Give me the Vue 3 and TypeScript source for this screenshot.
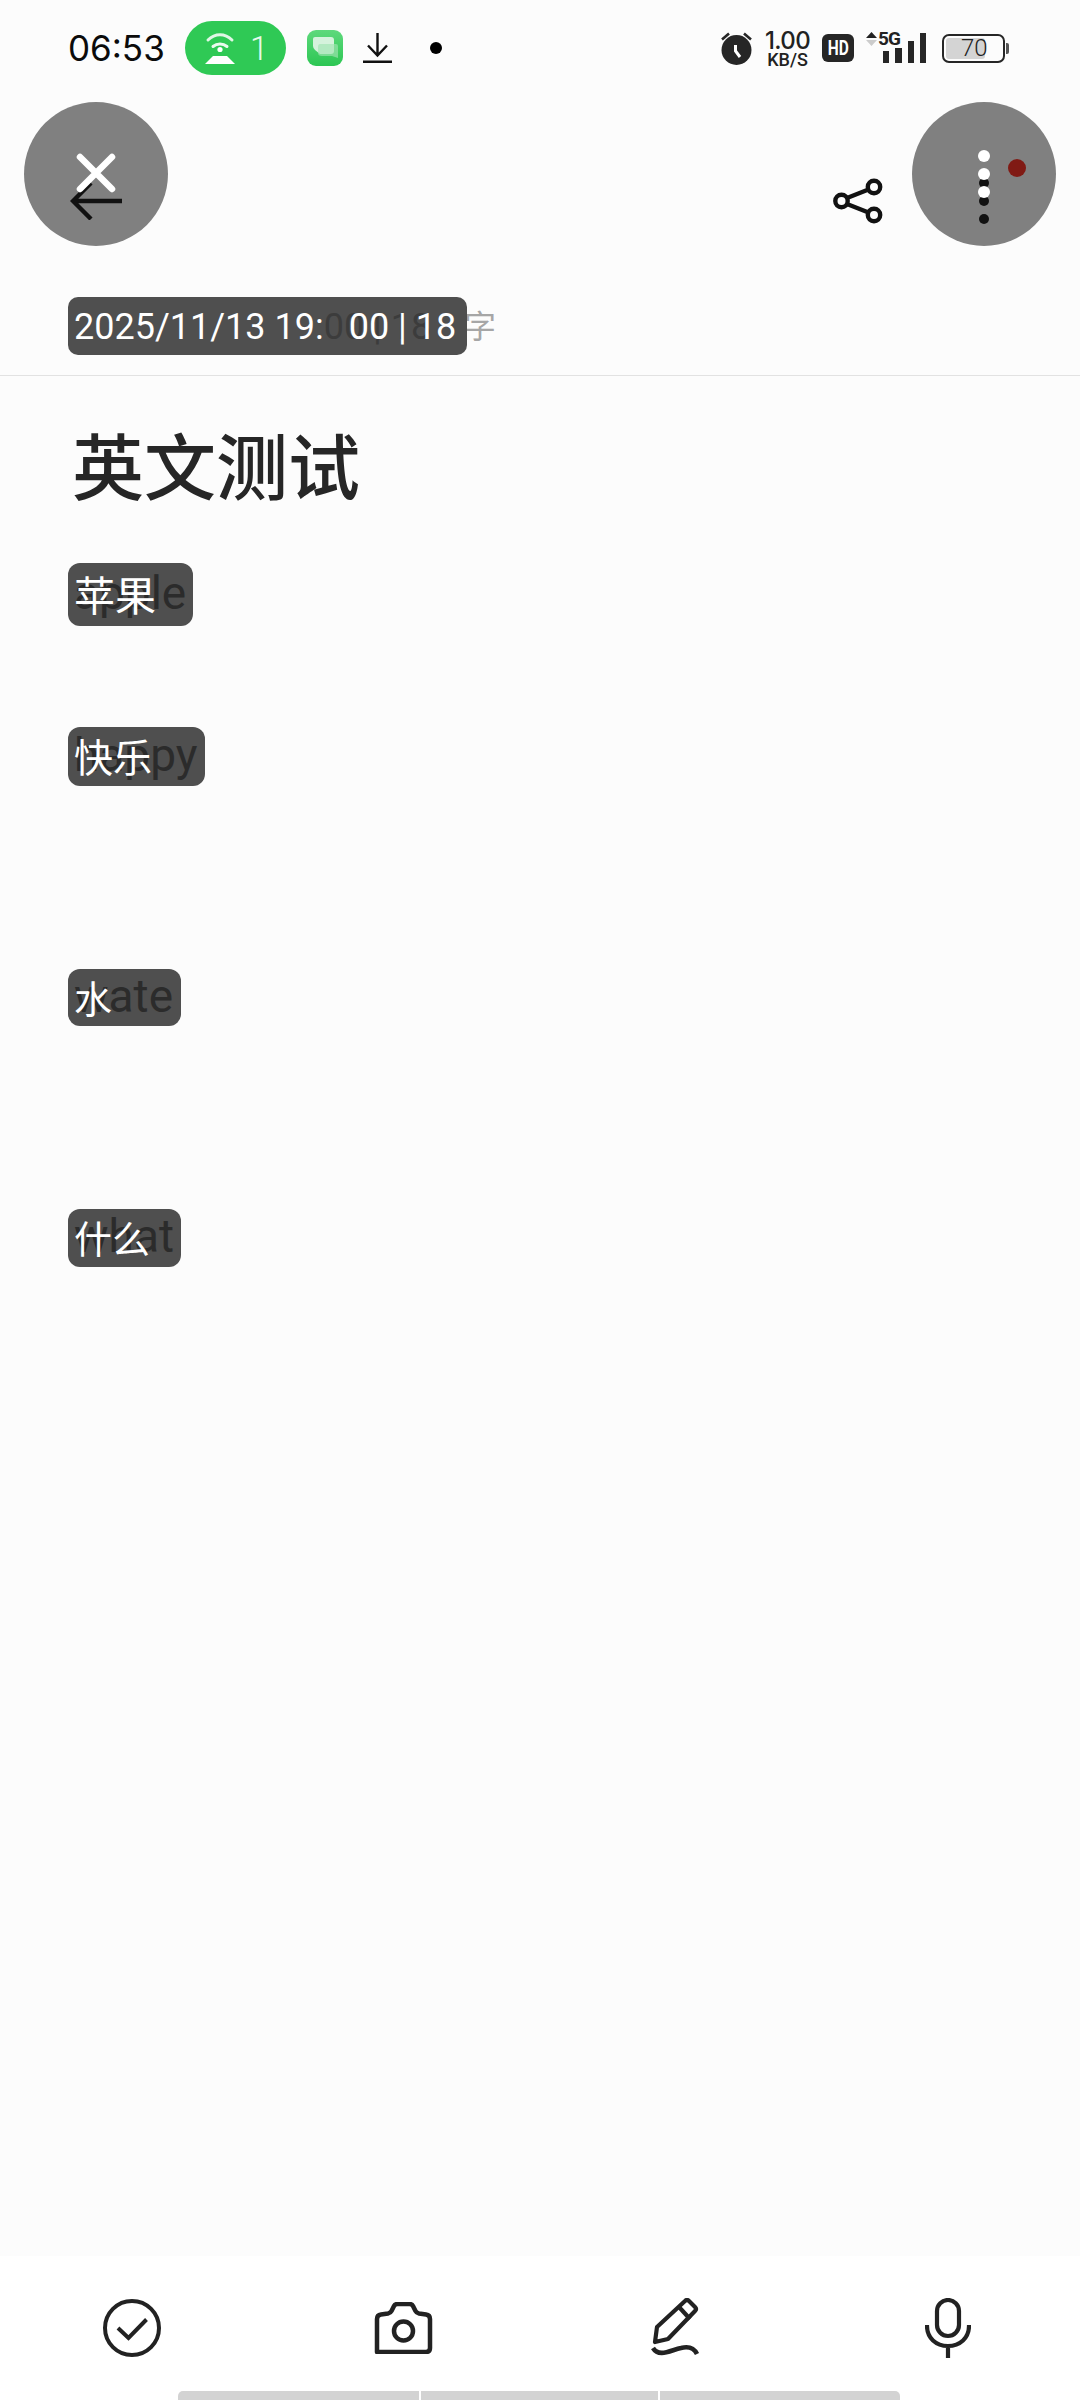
<script setup lang="ts">
interface Word { en: string; zh: string; w: number; h: number; gap: number; fs: number }
const words: Word[] = [
  { en: 'apple', zh: '苹果', w: 125, h: 63, gap: 0, fs: 41 },
  { en: 'happy', zh: '快乐', w: 137, h: 59, gap: 101, fs: 39 },
  { en: 'wate', zh: '水', w: 113, h: 57, gap: 183, fs: 38 },
  { en: 'what', zh: '什么', w: 113, h: 58, gap: 183, fs: 38 },
]
</script>

<template>
  <div class="page">
    <header class="status">
      <div class="status-left">
        <span class="time">06:53</span>
        <span class="pill">
          <svg width="30" height="32" viewBox="0 0 30 32" fill="none">
            <path d="M3 8C10 1 20 1 27 8" stroke="#fff" stroke-width="3" stroke-linecap="round" opacity=".85" />
            <path d="M8 14.500C12 11 18 11 22 14.500" stroke="#fff" stroke-width="3" stroke-linecap="round" opacity=".9" />
            <circle cx="15" cy="17.500" r="2.600" fill="#fff" />
            <path d="M8 24H22L30 32H0Z" fill="#fff" />
          </svg>
          <span class="pill-num">1</span>
        </span>
        <svg class="app" width="36" height="36" viewBox="0 0 36 36">
          <defs>
            <linearGradient id="appg" x1="0" y1="0" x2="0" y2="1">
              <stop offset="0" stop-color="#5ed97c" />
              <stop offset="1" stop-color="#2cc653" />
            </linearGradient>
          </defs>
          <rect width="36" height="36" rx="9" fill="url(#appg)" />
          <path d="M8 7H24Q27 7 27 10V21Q27 24 24 24H13L8 20Q6 18 6 16V9Q6 7 8 7Z" fill="#d5f2dc" />
          <path d="M13 14H29Q31 14 31 16V28L25 26H15Q11 26 11 23V17Q11 14 13 14Z" fill="#a2e3b2" opacity=".65" />
        </svg>
        <svg class="dl" width="29" height="30" viewBox="0 0 29 30" fill="none" stroke="#111" stroke-width="2.400">
          <path d="M14.500 0V22M5 12.500L14.500 22.500L24 12.500M0 28.800H29" />
        </svg>
        <span class="dot"></span>
      </div>
      <div class="status-right">
        <svg width="31" height="33" viewBox="0 0 31 33">
          <circle cx="15.500" cy="18" r="15" fill="#262626" />
          <path d="M1 7.500L8 1.500M30 7.500L23 1.500" stroke="#262626" stroke-width="2.600" />
          <path d="M14.500 13V19L19 25" stroke="#fff" stroke-width="3" fill="none" />
        </svg>
        <span class="speed"><span class="speed-num">1.00</span><span class="speed-unit">KB/S</span></span>
        <span class="hd"><span class="hd-text">HD</span></span>
        <span class="signal">
          <svg class="arrows" width="11" height="14" viewBox="0 0 11 14">
            <path d="M5.500 0L11 6H0Z" fill="#222" />
            <path d="M5.500 14L11 8H0Z" fill="#ccc" />
          </svg>
          <span class="five">5G</span>
          <span class="bars">
            <i class="b1"></i><i class="b2"></i><i class="b3"></i><i class="b4"></i>
          </span>
        </span>
        <span class="batt">
          <span class="batt-box"><span class="batt-fill"></span><span class="batt-num">70</span></span>
          <span class="batt-tip"></span>
        </span>
      </div>
    </header>

    <div class="toolbar">
      <span class="ghost ghost-left"></span>
      <span class="ghost ghost-right"></span>
      <svg class="back" width="52" height="38" viewBox="0 0 52 38" fill="none" stroke="#111" stroke-width="4.400">
        <path d="M52 19H3M21 1L3 19L21 37" />
      </svg>
      <svg class="close" width="40" height="40" viewBox="0 0 40 40" stroke="#fff" stroke-width="6.500" stroke-linecap="round">
        <path d="M4 4L36 36M36 4L4 36" />
      </svg>
      <svg class="share" width="50" height="46" viewBox="0 0 50 46" fill="none" stroke="#111" stroke-width="4.400">
        <circle cx="8.500" cy="23" r="6.200" />
        <circle cx="41" cy="9" r="6.200" />
        <circle cx="41" cy="37" r="6.200" />
        <path d="M14 20L35.500 11.500M14 26L35.500 34.500" />
      </svg>
      <span class="dots dots-dark"><i></i><i></i><i></i></span>
      <span class="dots dots-light"><i></i><i></i><i></i></span>
      <span class="red"></span>
    </div>

    <div class="meta">
      <div class="meta-box">
        <span class="meta-dim">2025/11/13 19:00 | 18</span>
        <span class="meta-top">2025/11/13 19:<span class="meta-gap"></span>00 | 18</span>
      </div>
      <span class="meta-unit">字</span>
    </div>

    <main class="note">
      <h1 class="title">英文测试</h1>
      <div
        v-for="word in words"
        :key="word.en"
        class="tag"
        :style="{ width: word.w + 'px', height: word.h + 'px', marginTop: word.gap + 'px' }"
      >
        <span class="en">{{ word.en }}</span>
        <span class="zh" :style="{ fontSize: word.fs + 'px' }">{{ word.zh }}</span>
      </div>
    </main>

    <footer class="bottom">
      <div class="tools">
        <span class="tool">
          <svg width="60" height="60" viewBox="0 0 60 60" fill="none" stroke="#222" stroke-width="4">
            <circle cx="30" cy="30" r="27" />
            <path d="M16 30L26.500 40L44.500 21.500" />
          </svg>
        </span>
        <span class="tool">
          <svg width="60" height="52" viewBox="0 0 60 52" fill="none" stroke="#222" stroke-width="4.500" stroke-linejoin="round">
            <path d="M3 50V17Q3 13 7 12.500L14 11.500Q16.500 11 17.500 9L20 4Q21 2 23.500 2H35.500Q38 2 39 4L41.500 9Q42.500 11 45 11.500L52 12.500Q56 13 56 17V46Q56 50 52 50Z" />
            <circle cx="29.500" cy="29" r="9.500" />
          </svg>
        </span>
        <span class="tool">
          <svg width="50" height="60" viewBox="0 0 50 60" fill="none" stroke="#222" stroke-width="4.200" stroke-linejoin="round">
            <path d="M4 44L6 29L34 3Q36 1 38 3L44 9Q46 11 44 13L17 41Z" />
            <path d="M28 9L39 21" />
            <path d="M2 50C8 60 20 52 30 50C38 48 43 50 46 56" stroke-width="4.600" />
          </svg>
        </span>
        <span class="tool">
          <svg width="46" height="60" viewBox="0 0 46 60" fill="none" stroke="#222" stroke-width="4.200">
            <rect x="12" y="2" width="22" height="36" rx="11" />
            <path d="M2 27V28C2 40 11 48 23 48C35 48 44 40 44 28V27M23 48V60" />
          </svg>
        </span>
      </div>
      <div class="home"><i class="h1"></i><i class="h2"></i><i class="h3"></i></div>
    </footer>
  </div>
</template>

<style scoped>
.page {
  position: relative;
  width: 1080px;
  height: 2400px;
  overflow: hidden;
  background: #fcfcfc;
  display: flex;
  flex-direction: column;
  font-family: Roboto, "Noto Sans CJK SC", sans-serif;
  color: #222;
}

/* status bar */
.status {
  height: 95px;
  flex: none;
  box-sizing: border-box;
  padding: 1px 71px 0 68px;
  display: flex;
  justify-content: space-between;
  align-items: center;
}
.status-left,
.status-right {
  display: flex;
  align-items: center;
}
.time {
  width: 117px;
  font-family: Inter, sans-serif;
  font-size: 35px;
  color: #0b0b0b;
}
.pill {
  width: 101px;
  height: 54px;
  box-sizing: border-box;
  padding-left: 20px;
  border-radius: 27px;
  background: #2fc955;
  display: flex;
  align-items: center;
  gap: 15px;
}
.pill-num {
  font-size: 33px;
  color: #e8f9ec;
  font-weight: 300;
}
.app {
  margin-left: 21px;
}
.dl {
  margin-left: 20px;
}
.dot {
  width: 12px;
  height: 12px;
  border-radius: 50%;
  background: #000;
  margin-left: 38px;
}
.speed {
  width: 47px;
  margin-left: 12px;
  display: flex;
  flex-direction: column;
  align-items: center;
}
.speed-num {
  font-family: Inter, sans-serif;
  font-size: 24px;
  line-height: 21px;
  font-weight: 500;
  letter-spacing: -0.6px;
}
.speed-unit {
  margin-top: 1px;
  font-size: 18px;
  line-height: 15px;
  font-weight: 500;
  white-space: nowrap;
}
.hd {
  width: 32px;
  height: 28px;
  margin-left: 11px;
  background: #262626;
  border-radius: 6px;
  color: #fff;
  display: flex;
  align-items: center;
  justify-content: center;
}
.hd-text {
  font-size: 21px;
  font-weight: 700;
  line-height: 28px;
  transform: scaleX(0.74);
}
.signal {
  position: relative;
  width: 60px;
  height: 30px;
  margin-left: 12px;
}
.arrows {
  position: absolute;
  left: 0;
  top: -1px;
}
.five {
  position: absolute;
  left: 12px;
  top: -2px;
  font-size: 19px;
  line-height: 16px;
  font-weight: 700;
  letter-spacing: -0.8px;
}
.bars {
  position: absolute;
  left: 17px;
  bottom: 0;
  display: flex;
  align-items: flex-end;
  gap: 6px;
}
.bars i {
  display: block;
  width: 6.300px;
  background: #262626;
}
.b1 { height: 12px; }
.b2 { height: 15px; }
.b3 { height: 22px; }
.b4 { height: 30px; }
.batt {
  display: flex;
  align-items: center;
  margin-left: 16px;
}
.batt-box {
  position: relative;
  display: block;
  box-sizing: border-box;
  width: 63px;
  height: 29px;
  border: 2px solid #262626;
  border-radius: 7px;
}
.batt-fill {
  position: absolute;
  left: 2px;
  top: 2px;
  bottom: 2px;
  width: 39px;
  background: #d4d4d4;
  border-radius: 3px;
}
.batt-num {
  position: absolute;
  left: 17px;
  top: 0;
  font-size: 24px;
  line-height: 25px;
  font-weight: 300;
}
.batt-tip {
  width: 3px;
  height: 11px;
  margin-left: 1px;
  background: #555;
  border-radius: 0 2px 2px 0;
}

/* toolbar */
.toolbar {
  position: relative;
  height: 200px;
  flex: none;
}
.ghost {
  position: absolute;
  top: 7px;
  width: 144px;
  height: 144px;
  border-radius: 50%;
  background: #808080;
}
.ghost-left { left: 24px; }
.ghost-right { left: 912px; }
.back {
  position: absolute;
  left: 70px;
  top: 87px;
}
.close {
  position: absolute;
  left: 76px;
  top: 58px;
}
.share {
  position: absolute;
  left: 833px;
  top: 83px;
}
.dots {
  position: absolute;
  display: flex;
  flex-direction: column;
}
.dots i {
  display: block;
  border-radius: 50%;
}
.dots-dark {
  left: 979px;
  top: 83px;
  gap: 8px;
}
.dots-dark i {
  width: 10px;
  height: 10px;
  background: #111;
}
.dots-light {
  left: 978px;
  top: 55px;
  gap: 6px;
}
.dots-light i {
  width: 12px;
  height: 12px;
  background: #fff;
}
.red {
  position: absolute;
  left: 1008px;
  top: 64px;
  width: 18px;
  height: 18px;
  border-radius: 50%;
  background: #801a14;
}

/* date line */
.meta {
  flex: none;
  height: 81px;
  box-sizing: border-box;
  padding: 2px 0 0 68px;
  border-bottom: 1px solid #e2e2e2;
  display: flex;
  align-items: flex-start;
}
.meta-box {
  position: relative;
  width: 399px;
  height: 58px;
  background: #4f4f4f;
  border-radius: 10px;
}
.meta-dim,
.meta-top {
  position: absolute;
  left: 6px;
  top: 1px;
  font-size: 36px;
  line-height: 58px;
  white-space: nowrap;
}
.meta-dim {
  color: #3c3c3c;
}
.meta-top {
  color: #fff;
}
.meta-gap {
  display: inline-block;
  width: 25px;
}
.meta-unit {
  margin: 10px 0 0 -3px;
  font-size: 32px;
  line-height: 40px;
  color: #a6a6a6;
}

/* note body */
.note {
  flex: 1;
  padding: 49px 0 0 68px;
}
.title {
  margin: 0 0 48px 4px;
  font-size: 72px;
  line-height: 90px;
  font-weight: 500;
  color: #262626;
}
.tag {
  position: relative;
  background: #4f4f4f;
  border-radius: 12px;
  display: flex;
  align-items: center;
}
.en {
  margin: -4px 0 0 6px;
  font-size: 46px;
  line-height: 46px;
  color: #2b2b2b;
  white-space: nowrap;
}
.zh {
  position: absolute;
  left: 6px;
  top: -3px;
  bottom: 0;
  display: flex;
  align-items: center;
  color: #fff;
  white-space: nowrap;
}

/* bottom bar */
.bottom {
  flex: none;
  height: 144px;
  box-sizing: border-box;
  padding-top: 42px;
  background: #fff;
}
.tools {
  margin-left: -4px;
  height: 60px;
  display: flex;
}
.tool {
  width: 272px;
  flex: none;
  display: flex;
  align-items: center;
  justify-content: center;
}
.home {
  margin: 33px 0 0 178px;
  width: 722px;
  height: 9px;
  display: flex;
  gap: 2px;
}
.home i {
  display: block;
  height: 9px;
  background: #d3d3d3;
}
.h1 {
  width: 241px;
  border-radius: 5px 0 0 0;
}
.h2 {
  width: 237px;
}
.h3 {
  width: 240px;
  border-radius: 0 5px 0 0;
}
</style>
